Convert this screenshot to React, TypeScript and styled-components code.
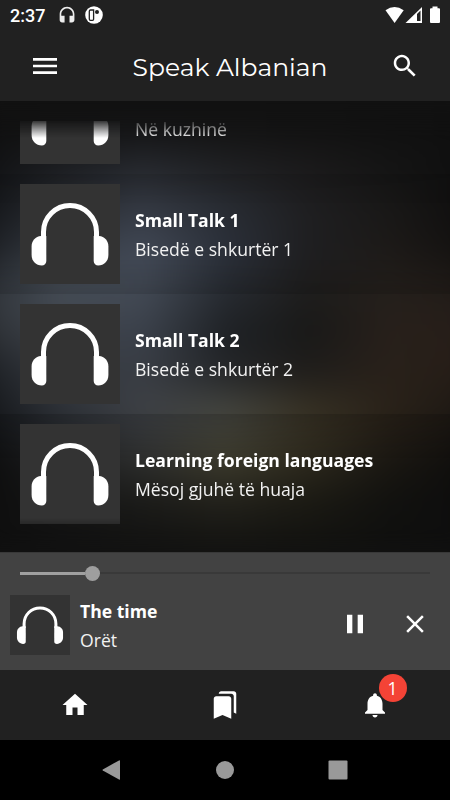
import React from "react";
import styled, { createGlobalStyle, css } from "styled-components";

const Global = createGlobalStyle`
  *, *::before, *::after { box-sizing: border-box; }
  body { margin: 0; background: #000; }
`;

const Screen = styled.div`
  width: 450px;
  height: 800px;
  display: flex;
  flex-direction: column;
  overflow: hidden;
  color: #fff;
  background: #000;
  font-family: "Open Sans", "Noto Sans", sans-serif;
`;

const StatusBar = styled.div`
  height: 30px;
  flex: none;
  display: flex;
  align-items: center;
  gap: 9px;
  padding: 0 5px 0 10px;
  background: #212121;
  svg { display: block; flex: none; }
`;

const Clock = styled.span`
  width: 39px;
  padding-top: 1px;
  font: 500 18px/30px Roboto, sans-serif;
  color: #fff;
`;

const Spacer = styled.div`
  flex: 1;
`;

const AppBar = styled.header`
  height: 71px;
  flex: none;
  display: grid;
  grid-template-columns: 90px 1fr 90px;
  align-items: center;
  background: #212121;
`;

const Title = styled.h1`
  margin: 0;
  padding: 3px 0 0 10px;
  text-align: center;
  white-space: nowrap;
  font: 400 25px/32px Montserrat, Lato, sans-serif;
`;

const IconButton = styled.button<{ $width?: number }>`
  width: ${(p) => (p.$width ? `${p.$width}px` : "100%")};
  height: 60px;
  padding: 0;
  border: 0;
  background: none;
  color: #fff;
  display: flex;
  align-items: center;
  justify-content: center;
`;

const Content = styled.main`
  position: relative;
  height: 451px;
  flex: none;
  padding-top: 20px;
  overflow: hidden;
  background: #111;
`;

const Backdrop = styled.div`
  position: absolute;
  inset: 0 -24px;
  filter: blur(12px);
`;

const Glow = styled.div<{ $from: number; $to: number; $colors: string[] }>`
  position: absolute;
  inset: ${(p) => p.$from}px 0 0;
  background: linear-gradient(to right, ${(p) => p.$colors.join(", ")});
  mask-image: linear-gradient(to bottom, transparent, #000 ${(p) => p.$to - p.$from}px);
`;

const List = styled.ul`
  position: relative;
  margin: 0;
  padding: 0;
  height: 411px;
  overflow: hidden;
  display: flex;
  flex-direction: column;
  justify-content: flex-end;
  list-style: none;
  mask-image: linear-gradient(to bottom, rgba(0, 0, 0, 0.15), #000 17px, #000 397px, rgba(0, 0, 0, 0.3) 411px);
`;

const Row = styled.li`
  height: 120px;
  flex: none;
  padding: 10px 20px;
  display: flex;
  align-items: center;
  gap: 15px;
  &:nth-child(2) {
    background: linear-gradient(to bottom, rgba(0, 0, 0, 0.07), transparent 30px, transparent 85px, rgba(0, 0, 0, 0.1));
  }
  &:last-child {
    margin-bottom: -2px;
    background: linear-gradient(to bottom, rgba(0, 0, 0, 0.14), transparent 45px);
  }
`;

const Cover = styled.div<{ $size: number }>`
  width: ${(p) => p.$size}px;
  height: ${(p) => p.$size}px;
  flex: none;
  background: #333;
  svg { display: block; width: 100%; height: 100%; }
`;

const Lines = styled.div`
  flex: 1;
  padding-top: 2px;
  display: flex;
  flex-direction: column;
`;

const textLine = css`
  min-height: 29px;
  font-size: 17.6px;
  line-height: 29px;
  white-space: nowrap;
`;

const Primary = styled.span`
  ${textLine}
  font-weight: 700;
`;

const Secondary = styled.span`
  ${textLine}
  font-weight: 400;
  color: #f2f2f2;
`;

const Player = styled.section`
  height: 118px;
  flex: none;
  border-top: 1px solid #383838;
  background: #424242;
`;

const Seek = styled.div`
  height: 42px;
  padding: 0 20px 2px;
  display: flex;
  align-items: center;
`;

const Elapsed = styled.div`
  width: 65px;
  height: 3px;
  background: #a0a0a0;
`;

const Thumb = styled.div`
  width: 15px;
  height: 15px;
  border-radius: 50%;
  background: #9e9e9e;
`;

const Remaining = styled.div`
  flex: 1;
  height: 2px;
  background: #393939;
`;

const NowPlaying = styled.div`
  height: 60px;
  padding: 0 5px 0 10px;
  display: flex;
  align-items: center;
  gap: 10px;
`;

const Controls = styled.div`
  display: flex;
  padding-bottom: 3px;
`;

const TabBar = styled.nav`
  height: 70px;
  flex: none;
  display: grid;
  grid-template-columns: repeat(3, 1fr);
  align-items: center;
  background: #212121;
`;

const Tab = styled.div`
  position: relative;
`;

const Badge = styled.span`
  position: absolute;
  left: 78.5px;
  top: -1.5px;
  width: 28px;
  height: 28px;
  border-radius: 14px;
  background: #f44336;
  text-align: center;
  font: 400 17.6px/28px "Open Sans", sans-serif;
`;

const SystemBar = styled.div`
  height: 60px;
  flex: none;
  display: grid;
  grid-template-columns: 112px 116px 109px;
  padding-left: 55px;
  align-items: center;
  justify-items: center;
  background: #000;
`;

const paths = {
  menu: "M3 18h18v-2H3v2zm0-5h18v-2H3v2zm0-7v2h18V6H3z",
  search:
    "M15.5 14h-.79l-.28-.27C15.41 12.59 16 11.11 16 9.5 16 5.91 13.09 3 9.5 3S3 5.91 3 9.5 5.91 16 9.5 16c1.61 0 3.09-.59 4.23-1.57l.27.28v.79l5 4.99L20.49 19l-4.99-5zm-6 0C7.01 14 5 11.99 5 9.5S7.01 5 9.5 5 14 7.01 14 9.5 11.99 14 9.5 14z",
  pause: "M6 19h4V5H6v14zm8-14v14h4V5h-4z",
  close:
    "M19 6.41L17.59 5 12 10.59 6.41 5 5 6.41 10.59 12 5 17.59 6.41 19 12 13.41 17.59 19 19 17.59 13.41 12z",
  home: "M10 20v-6h4v6h5v-8h3L12 3 2 12h3v8z",
  bookmarks:
    "M19 18l2 1V3c0-1.1-.9-2-2-2H8.99C7.89 1 7 1.9 7 3h10c1.1 0 2 .9 2 2v13zM15 5H5c-1.1 0-2 .9-2 2v16l7-3 7 3V7c0-1.1-.9-2-2-2z",
  bell:
    "M12 22c1.1 0 2-.9 2-2h-4c0 1.1.89 2 2 2zm6-6v-5c0-3.07-1.64-5.64-4.5-6.32V4c0-.83-.67-1.5-1.5-1.5s-1.5.67-1.5 1.5v.68C7.63 5.36 6 7.92 6 11v5l-2 2v1h16v-1l-2-2z",
  headset:
    "M12 1c-4.97 0-9 4.03-9 9v7c0 1.66 1.34 3 3 3h3v-8H5v-2c0-3.87 3.13-7 7-7s7 3.13 7 7v2h-4v8h3c1.66 0 3-1.34 3-3v-7c0-4.97-4.03-9-9-9z",
};

const Icon = ({ name, size }: { name: keyof typeof paths; size: number }) => (
  <svg width={size} height={size} viewBox="0 0 24 24" fill="currentColor">
    <path d={paths[name]} />
  </svg>
);

const Headphones = () => (
  <svg viewBox="0 0 100 100">
    <path d="M23.500 55V48a26.500 26.500 0 0 1 53 0V55" fill="none" stroke="#fff" strokeWidth="5" />
    <path d="M26.300 52V77a4.500 4.500 0 0 1-4.500 4.500C16 81.500 11.600 77 11.600 71V62.500C11.600 56.500 15.500 52.400 21 52Z" fill="#fff" />
    <path d="M73.700 52V77a4.500 4.500 0 0 0 4.500 4.500C84 81.500 88.400 77 88.400 71V62.500C88.400 56.500 84.500 52.400 79 52Z" fill="#fff" />
  </svg>
);

const glows = [
  { from: 0, to: 25, colors: ["#101010", "#121212", "#131314", "#131313", "#121212", "#111111", "#101010"] },
  { from: 25, to: 73, colors: ["#101113", "#1e2024", "#292c32", "#212225", "#1c1b1c", "#151515", "#0f0f0f"] },
  { from: 73, to: 109, colors: ["#131518", "#272a30", "#353a44", "#292d34", "#1f1f21", "#191817", "#0f0e0e"] },
  { from: 109, to: 149, colors: ["#1b1d21", "#353b43", "#424956", "#2b303a", "#1f1f21", "#1d1a18", "#131110"] },
  { from: 149, to: 193, colors: ["#2f3338", "#464d56", "#434a55", "#272b31", "#1e1d1c", "#25201c", "#221c18"] },
  { from: 193, to: 229, colors: ["#2c2f33", "#3e434b", "#3b414b", "#1f2226", "#191918", "#28201b", "#271e19"] },
  { from: 229, to: 269, colors: ["#1b1e22", "#353940", "#393d44", "#242629", "#1f1d1b", "#29211a", "#261d17"] },
  { from: 269, to: 312, colors: ["#121417", "#2c3036", "#3e4146", "#464741", "#393325", "#2a2219", "#1b1713"] },
  { from: 312, to: 359, colors: ["#0c0c0c", "#1b1c1e", "#2d2e2d", "#3c3a2c", "#2d291d", "#1a1712", "#0e0d0c"] },
  { from: 359, to: 404, colors: ["#0d0d0d", "#141414", "#1a1a18", "#21201a", "#1a1913", "#11110f", "#0d0d0d"] },
  { from: 404, to: 450, colors: ["#0f0f0f", "#111111", "#121211", "#131311", "#121210", "#10100f", "#0f0f0f"] },
];

const tracks = [
  { title: "", subtitle: "Në kuzhinë" },
  { title: "Small Talk 1", subtitle: "Bisedë e shkurtër 1" },
  { title: "Small Talk 2", subtitle: "Bisedë e shkurtër 2" },
  { title: "Learning foreign languages", subtitle: "Mësoj gjuhë të huaja" },
];

export default function App() {
  return (
    <>
      <Global />
      <Screen>
        <StatusBar>
          <Clock>2:37</Clock>
          <svg width="18" height="20" viewBox="0 0 18 20" fill="#eee">
            <path transform="translate(-.8 1) scale(.82)" d={paths.headset} />
          </svg>
          <svg width="18" height="18" viewBox="0 0 18 18">
            <circle cx="9" cy="9" r="8.800" fill="#fff" />
            <path d="M5.500 4H8.600V13.200Q8.600 14.300 7.500 14.300H5.500Q4.300 14.300 4.300 13V5.200Q4.300 4 5.500 4Z" fill="none" stroke="#212121" strokeWidth="1.300" />
            <circle cx="12" cy="5.900" r="2" fill="#212121" />
          </svg>
          <Spacer />
          <svg width="60" height="20" viewBox="0 0 60 20">
            <path d="M.5 5.300Q9.500-1.500 18.700 5.300L9.600 18Z" fill="#fff" />
            <path d="M20.500 18L37 2V18Z" fill="#fff" />
            <path d="M32 9L35.500 5.500V16H32Z" fill="#212121" />
            <path d="M47.500 1.500h5v1.700h1.500q1 0 1 1V17q0 1-1 1h-8q-1 0-1-1V4.200q0-1 1-1h1.500Z" fill="#fff" />
          </svg>
        </StatusBar>
        <AppBar>
          <IconButton aria-label="Menu"><Icon name="menu" size={32} /></IconButton>
          <Title>Speak Albanian</Title>
          <IconButton aria-label="Search"><Icon name="search" size={30} /></IconButton>
        </AppBar>
        <Content>
          <Backdrop>
            {glows.map((g) => (
              <Glow key={g.from} $from={g.from} $to={g.to} $colors={g.colors} />
            ))}
          </Backdrop>
          <List>
            {tracks.map((t) => (
              <Row key={t.subtitle}>
                <Cover $size={100}><Headphones /></Cover>
                <Lines>
                  <Primary>{t.title}</Primary>
                  <Secondary>{t.subtitle}</Secondary>
                </Lines>
              </Row>
            ))}
          </List>
        </Content>
        <Player>
          <Seek>
            <Elapsed />
            <Thumb />
            <Remaining />
          </Seek>
          <NowPlaying>
            <Cover $size={60}><Headphones /></Cover>
            <Lines>
              <Primary>The time</Primary>
              <Secondary>Orët</Secondary>
            </Lines>
            <Controls>
              <IconButton $width={60} aria-label="Pause"><Icon name="pause" size={32} /></IconButton>
              <IconButton $width={60} aria-label="Close"><Icon name="close" size={30} /></IconButton>
            </Controls>
          </NowPlaying>
        </Player>
        <TabBar>
          <Tab><IconButton aria-label="Home"><Icon name="home" size={30} /></IconButton></Tab>
          <Tab><IconButton aria-label="Bookmarks"><Icon name="bookmarks" size={30} /></IconButton></Tab>
          <Tab>
            <IconButton aria-label="Notifications"><Icon name="bell" size={30} /></IconButton>
            <Badge>1</Badge>
          </Tab>
        </TabBar>
        <SystemBar>
          <svg width="18" height="20" viewBox="0 0 18 20" fill="#999"><path d="M18 .8V19.200Q18 20 17 19.500L.8 10.600Q.2 10 .8 9.400L17 .4Q18 0 18 .8Z" /></svg>
          <svg width="18" height="18" viewBox="0 0 18 18" fill="#999"><circle cx="9" cy="9" r="9" /></svg>
          <svg width="20" height="20" viewBox="0 0 20 20" fill="#999"><rect x=".5" y=".5" width="19" height="19" rx="1" /></svg>
        </SystemBar>
      </Screen>
    </>
  );
}
